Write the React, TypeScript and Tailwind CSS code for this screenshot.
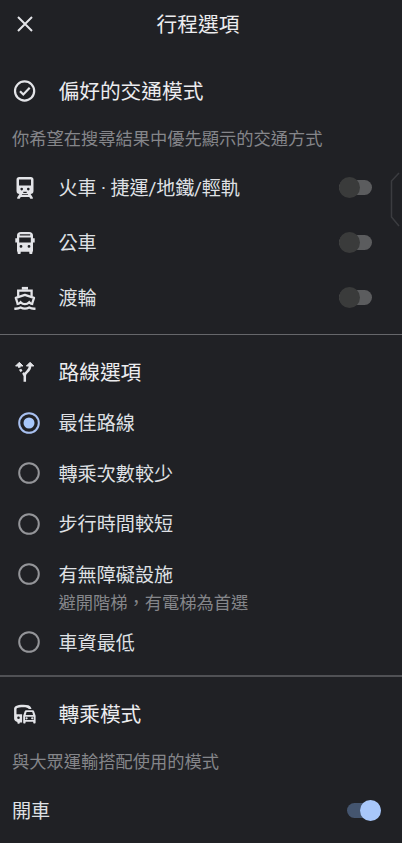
import { useState, type ReactNode } from "react";
import { clsx } from "clsx";

const CheckCircleIcon = () => (
  <svg viewBox="0 0 26 26" className="size-[26px]" fill="none" stroke="#e3e4e8" strokeWidth="2.2">
    <circle cx="12.6" cy="13" r="9.6" />
    <path d="M8 13.200l3.300 3.300 6.400-6.700" />
  </svg>
);

const TrainIcon = () => (
  <svg viewBox="0 0 26 26" className="size-[26px]" fill="#e3e4e8">
    <path
      fillRule="evenodd"
      d="M7.200 2h11.600c1.700 0 2.700 1 2.700 2.600v11.400c0 1.800-1.200 3-3 3H7.500c-1.800 0-3-1.200-3-3V4.600C4.500 3 5.500 2 7.200 2zM7 4.500v6h12v-6zM9.700 12.800a1.300 1.300 0 1 0 0 2.600 1.300 1.300 0 0 0 0-2.600zM16.300 12.800a1.300 1.300 0 1 0 0 2.600 1.300 1.300 0 0 0 0-2.600zM11.300 16.700h3.400v1.300h-3.400z"
    />
    <path d="M7.700 18.500h2.700l-.6 1.300h6.400l-.6-1.300h2.700l2.500 4v1.200h-2.500l-1-1.700H8.700l-1 1.700H5.200v-1.200z" />
  </svg>
);

const BusIcon = () => (
  <svg viewBox="0 0 26 26" className="size-[26px]" fill="#e3e4e8">
    <path
      fillRule="evenodd"
      d="M9 2h8c2.700 0 4 1.400 4 3.500v2.700h1.700v4.300H21v8.300c0 .5-.2.900-.6 1.200v1c0 .6-.4 1-1 1h-1.100c-.6 0-1-.4-1-1v-1.200H8.700V23c0 .6-.4 1-1 1H6.600c-.6 0-1-.4-1-1v-1c-.4-.3-.6-.7-.6-1.200v-8.300H3.300V8.200H5V5.500C5 3.400 6.300 2 9 2zM7.800 4.200v1.200h10.400V4.200zM7.200 7.500v5h11.600v-5zM9 15a1.400 1.400 0 1 0 0 2.800A1.400 1.400 0 0 0 9 15zM17 15a1.400 1.400 0 1 0 0 2.800 1.400 1.400 0 0 0 0-2.800z"
    />
  </svg>
);

const FerryIcon = () => (
  <svg viewBox="0 0 26 26" className="size-[26px]" fill="none" stroke="#e3e4e8" strokeWidth="2.3">
    <path d="M9.800 3.300h6.200" strokeWidth="2.800" />
    <path d="M6.200 11.500V5.600h13.400v5.900" />
    <path d="M5.600 18.500l-1.800-5.600 9.100-3 9.100 3-1.800 5.600" strokeLinejoin="round" />
    <path d="M4.600 19.200c1.800 0 3-.8 4-2 1.200 1.300 2.500 2 4.300 2s3.100-.7 4.300-2c1 1.200 2.200 2 4 2" />
    <path d="M2.300 23.700c2.600.2 4.600-.2 6.300-1.200 2.700 1.500 5.900 1.500 8.600 0 1.700 1 3.700 1.400 6.300 1.200" />
  </svg>
);

const RouteIcon = () => (
  <svg viewBox="0 0 26 26" className="size-[26px]" fill="none" stroke="#e3e4e8" strokeWidth="2.500">
    <path d="M12.800 22.700v-6.200c0-1.700 1-2.700 2.300-3.700 2-1.600 3-3.300 3-6.300" />
    <path d="M12.800 16.800c-.3-1.300-1-2.100-1.800-2.900M9.600 12.300c-.6-.6-1.100-1.200-1.500-2M7.500 8.800c-.2-.8-.3-1.500-.3-2.300" />
    <path
      d="M3.600 7l3.700-3.700L11 7zM14.400 7l3.700-3.700L21.800 7z"
      fill="#e3e4e8"
      strokeWidth="1"
      strokeLinejoin="round"
    />
  </svg>
);

const TransferIcon = () => (
  <svg viewBox="0 0 26 26" className="size-[26px]" fill="#e3e4e8">
    <path
      fillRule="evenodd"
      d="M4 5c1.500-.8 4-1.200 7.300-1.200 4.200 0 6.900.7 7.700 2.700l.5 1.500h-2.700c-.8-1.200-2.500-1.700-5.500-1.700-3 0-5 .3-6 .8-.6.300-.8.600-.8 1.200v4.900h5.600v8.400H7.800v.3c0 .5-.3.800-.8.800h-.8c-.5 0-.8-.3-.8-.8V21c-1.900-.4-3.300-1.500-3.300-3.500V7.800C2.100 6.500 2.700 5.600 4 5zM6.500 15.500a1.300 1.300 0 1 0 0 2.600 1.300 1.300 0 0 0 0-2.600z"
    />
    <path
      fillRule="evenodd"
      d="M14.200 9.200h6.400c.8 0 1.300.3 1.500 1l1.500 4.500v6.900c0 .6-.3.900-.8.900h-.8c-.5 0-.8-.3-.8-.9v-.9h-7.600v.9c0 .6-.3.900-.8.900H12c-.5 0-.8-.3-.8-.9v-6.900l1.500-4.500c.2-.7.700-1 1.500-1zM14.600 11.100l-.9 2.800h7.400l-.9-2.800zM13.100 15.700v3.200h8.600v-3.200zM14.600 16.200a1.100 1.100 0 1 0 0 2.200 1.100 1.100 0 0 0 0-2.200zM20.200 16.200a1.100 1.100 0 1 0 0 2.200 1.100 1.100 0 0 0 0-2.200z"
    />
  </svg>
);

interface ToggleProps {
  label: string;
  checked: boolean;
  onChange: () => void;
}

const Toggle = ({ label, checked, onChange }: ToggleProps) => (
  <button
    type="button"
    role="switch"
    aria-label={label}
    aria-checked={checked}
    onClick={onChange}
    className="flex h-[22px] w-[33.5px] items-center"
  >
    <span
      className={clsx(
        "flex h-[15px] w-full items-center rounded-full",
        checked ? "justify-end bg-[#44556f]" : "bg-[#5b5c5e]",
      )}
    >
      <span
        className={clsx(
          "size-[21px] shrink-0 rounded-full",
          checked ? "bg-[#a8c7fa]" : "bg-[#3a3b3b]",
        )}
      />
    </span>
  </button>
);

interface SectionHeadingProps {
  icon: ReactNode;
  children: ReactNode;
}

const SectionHeading = ({ icon, children }: SectionHeadingProps) => (
  <div className="flex h-[51px] items-center gap-[20.5px] pl-3">
    {icon}
    <h2 className="text-[20.7px] text-[#ececef]">{children}</h2>
  </div>
);

const modes = [
  {
    id: "rail",
    label: "火車 · 捷運/地鐵/輕軌",
    icon: <TrainIcon />,
    // narrow dot and slashes, Roboto sits a little higher than the CJK face
    labelClassName: "pt-[3px] tracking-[-0.13px] font-[Roboto,'Noto_Sans_CJK_TC',sans-serif]",
  },
  { id: "bus", label: "公車", icon: <BusIcon /> },
  { id: "ferry", label: "渡輪", icon: <FerryIcon /> },
];

const routes = [
  { id: "best", label: "最佳路線" },
  { id: "transfers", label: "轉乘次數較少" },
  { id: "walking", label: "步行時間較短" },
  { id: "accessible", label: "有無障礙設施", hint: "避開階梯，有電梯為首選" },
  { id: "fare", label: "車資最低" },
];

export default function App() {
  const [enabled, setEnabled] = useState<string[]>(["drive"]);
  const [route, setRoute] = useState("best");

  const toggle = (id: string) =>
    setEnabled((prev) => (prev.includes(id) ? prev.filter((item) => item !== id) : [...prev, id]));

  return (
    <main className="relative h-[843px] w-[402px] overflow-hidden bg-[#202125] font-['Noto_Sans_CJK_TC',sans-serif] text-[19.1px] text-[#dfe0e4]">
      <header className="grid h-12 grid-cols-[48px_1fr_54px] items-center">
        <button type="button" aria-label="關閉" className="flex pl-[17px]">
          <svg viewBox="0 0 16 16" className="size-4" stroke="#e3e4e8" strokeWidth="2">
            <path d="M1 1l14 14M15 1L1 15" />
          </svg>
        </button>
        <h1 className="text-center text-[20.7px] text-[#ececef]">行程選項</h1>
      </header>

      <section className="border-b border-[#66676b] pt-[17px] pb-[9px]">
        <SectionHeading icon={<CheckCircleIcon />}>偏好的交通模式</SectionHeading>
        <p className="mt-2.5 flex h-6 items-center pl-3 text-[17.25px] text-[#85868a]">
          你希望在搜尋結果中優先顯示的交通方式
        </p>
        <ul className="pt-2.5">
          {modes.map(({ id, label, icon, labelClassName }) => (
            <li key={id} className="flex h-[55px] items-center gap-[20.5px] pr-[30px] pl-3">
              {icon}
              <span className={clsx("flex-1", labelClassName)}>{label}</span>
              <Toggle label={label} checked={enabled.includes(id)} onChange={() => toggle(id)} />
            </li>
          ))}
        </ul>
      </section>

      <section className="border-b-2 border-[#505155] pt-[11px] pb-2">
        <SectionHeading icon={<RouteIcon />}>路線選項</SectionHeading>
        <div role="radiogroup" aria-label="路線選項">
          {routes.map(({ id, label, hint }) => (
            <button
              key={id}
              type="button"
              role="radio"
              aria-checked={route === id}
              onClick={() => setRoute(id)}
              className={clsx("flex w-full gap-[18.5px] pt-3 pl-[18px] text-left", hint ? "pb-0.5" : "pb-[11.5px]")}
            >
              <span className="flex h-[27px] items-center">
                <svg viewBox="0 0 22 22" className="size-[22px]" fill="none">
                  <circle cx="11" cy="11" r="9.800" strokeWidth="2" stroke={route === id ? "#a8c0f0" : "#949599"} />
                  {route === id && <circle cx="11" cy="11" r="5.500" fill="#a8c7fa" />}
                </svg>
              </span>
              <span className="flex flex-col">
                <span className="leading-[27px]">{label}</span>
                {hint && <span className="text-[17.25px] leading-[27px] text-[#85868a]">{hint}</span>}
              </span>
            </button>
          ))}
        </div>
      </section>

      <section className="pt-[11px]">
        <SectionHeading icon={<TransferIcon />}>轉乘模式</SectionHeading>
        <p className="mt-2.5 flex h-6 items-center pl-3 text-[17.25px] text-[#85868a]">
          與大眾運輸搭配使用的模式
        </p>
        <div className="mt-2.5 flex h-[55px] items-center justify-between pr-[21.5px] pl-3">
          <span>開車</span>
          <Toggle label="開車" checked={enabled.includes("drive")} onChange={() => toggle("drive")} />
        </div>
      </section>

      {/* edge panel handle */}
      <svg
        viewBox="0 0 12 56"
        className="absolute top-[172px] right-0 h-14 w-3"
        fill="none"
        stroke="#3b3c40"
        strokeWidth="1.500"
      >
        <path d="M9 1L1.500 9v36L9 54" />
      </svg>
    </main>
  );
}
